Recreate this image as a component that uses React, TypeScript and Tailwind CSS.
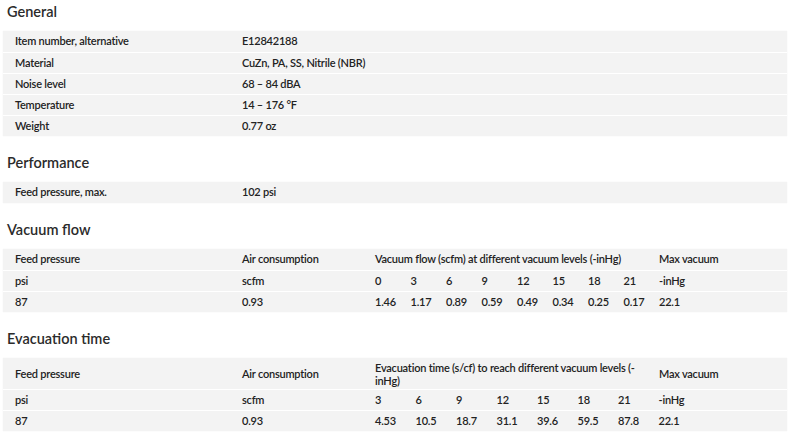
const vacLevels = ["0", "3", "6", "9", "12", "15", "18", "21"]
const vacFlow = ["1.46", "1.17", "0.89", "0.59", "0.49", "0.34", "0.25", "0.17"]
const evacLevels = ["3", "6", "9", "12", "15", "18", "21"]
const evacTime = ["4.53", "10.5", "18.7", "31.1", "39.6", "59.5", "87.8"]

const general = [
  ["Item number, alternative", "E12842188"],
  ["Material", "CuZn, PA, SS, Nitrile (NBR)"],
  ["Noise level", "68 – 84 dBA"],
  ["Temperature", "14 – 176 °F"],
  ["Weight", "0.77 oz"],
]

function Heading({ children, first }: { children: string; first?: boolean }) {
  return (
    <h2 className={`${first ? "mt-[2px]" : "mt-[17px]"} mb-[9px] px-[7px] text-[14.5px] leading-[20px] tracking-normal font-semibold text-[#2b2b2b]`}>
      {children}
    </h2>
  )
}

function Table({ children }: { children: React.ReactNode }) {
  return <div className="mx-[3px] bg-[#f3f3f3] shadow-[0_0_1px_rgba(0,0,0,0.08)]">{children}</div>
}

function App() {
  return (
    <div className="w-[790px] h-[438px] bg-white overflow-hidden text-[11px] tracking-[-0.02em] text-[#222] font-semibold" style={{ fontFamily: "Lato, 'Noto Sans', sans-serif" }}>
      <Heading first>General</Heading>
      <Table>
        {general.map(([k, v], i) => (
          <div key={k} className={`grid grid-cols-[227px_1fr] items-center h-[21px] pl-3 ${i > 0 ? "border-t border-white" : ""}`}>
            <div>{k}</div>
            <div>{v}</div>
          </div>
        ))}
      </Table>

      <Heading>Performance</Heading>
      <Table>
        <div className="grid grid-cols-[227px_1fr] items-center h-[21px] pl-3">
          <div>Feed pressure, max.</div>
          <div>102 psi</div>
        </div>
      </Table>

      <Heading>Vacuum flow</Heading>
      <Table>
        <div className="grid grid-cols-[227px_133px_284px_1fr] items-center h-[21px] pl-3">
          <div>Feed pressure</div>
          <div>Air consumption</div>
          <div className="whitespace-nowrap">Vacuum flow (scfm) at different vacuum levels (-inHg)</div>
          <div>Max vacuum</div>
        </div>
        <div className="grid grid-cols-[227px_133px_repeat(8,35.5px)_1fr] items-center h-[21px] pl-3 border-t border-white">
          <div>psi</div>
          <div>scfm</div>
          {vacLevels.map((l) => <div key={l}>{l}</div>)}
          <div>-inHg</div>
        </div>
        <div className="grid grid-cols-[227px_133px_repeat(8,35.5px)_1fr] items-center h-[21px] pl-3 border-t border-white">
          <div>87</div>
          <div>0.93</div>
          {vacFlow.map((v, i) => <div key={i}>{v}</div>)}
          <div>22.1</div>
        </div>
      </Table>

      <Heading>Evacuation time</Heading>
      <Table>
        <div className="grid grid-cols-[227px_133px_284px_1fr] items-center h-[31px] pl-3 leading-[13px]">
          <div>Feed pressure</div>
          <div>Air consumption</div>
          <div className="whitespace-nowrap">
            Evacuation time (s/cf) to reach different vacuum levels (-
            <br />
            inHg)
          </div>
          <div>Max vacuum</div>
        </div>
        <div className="grid grid-cols-[227px_133px_repeat(7,40.5px)_1fr] items-center h-[21px] pl-3 border-t border-white">
          <div>psi</div>
          <div>scfm</div>
          {evacLevels.map((l) => <div key={l}>{l}</div>)}
          <div>-inHg</div>
        </div>
        <div className="grid grid-cols-[227px_133px_repeat(7,40.5px)_1fr] items-center h-[21px] pl-3 border-t border-white">
          <div>87</div>
          <div>0.93</div>
          {evacTime.map((v, i) => <div key={i}>{v}</div>)}
          <div>22.1</div>
        </div>
      </Table>
    </div>
  )
}

export default App
